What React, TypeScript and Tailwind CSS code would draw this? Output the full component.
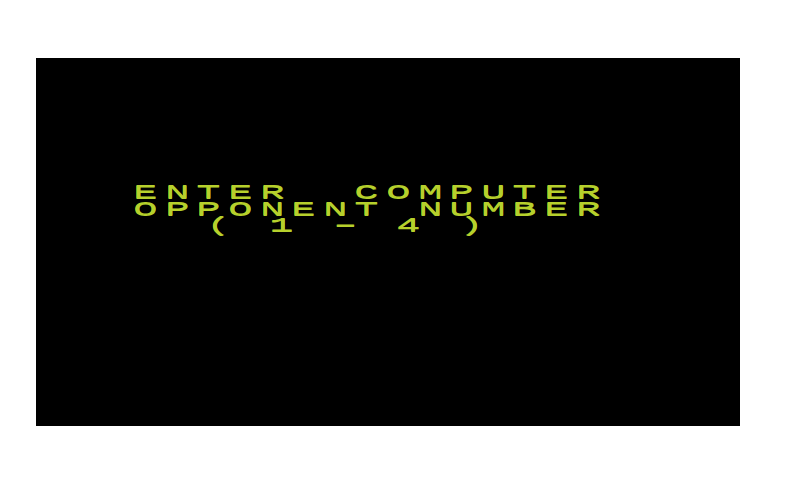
const LINES = [
  { text: "ENTER  COMPUTER", indent: 0 },
  { text: "OPPONENT NUMBER", indent: 0 },
  { text: "( 1 - 4 )", indent: 73 },
];

function Glyph({ ch }: { ch: string }) {
  // the dash is drawn much wider than the other glyphs
  const wide = ch === "-";
  return (
    <span className="inline-block w-[31.6px] text-center">
      <span
        className={
          wide
            ? "inline-block leading-[11.8px] scale-x-[4.2] scale-y-[1.4] [text-shadow:0_0.45px_0_#b6d02c]"
            : "inline-block leading-[11.8px] scale-x-[2.7] scale-y-[1.4] [text-shadow:0_0.45px_0_#b6d02c]"
        }
      >
        {ch === " " ? "\u00a0" : ch}
      </span>
    </span>
  );
}

function Row({ text, indent }: { text: string; indent: number }) {
  return (
    <div className="flex h-[16.5px] items-center leading-[16.5px]" style={{ paddingLeft: indent }}>
      {text.split("").map((ch, i) => (
        <Glyph key={i} ch={ch} />
      ))}
    </div>
  );
}

export default function App() {
  return (
    <div className="w-[788px] h-[480px] bg-white pt-[58px] pl-[36px]">
      {/* game screen */}
      <div className="w-[704px] h-[368px] bg-black pt-[128px] pl-[94px] text-[#b6d02c] text-[15px] font-['Liberation_Mono',monospace]">
        {LINES.map((l, i) => (
          <Row key={i} text={l.text} indent={l.indent} />
        ))}
      </div>
    </div>
  );
}
